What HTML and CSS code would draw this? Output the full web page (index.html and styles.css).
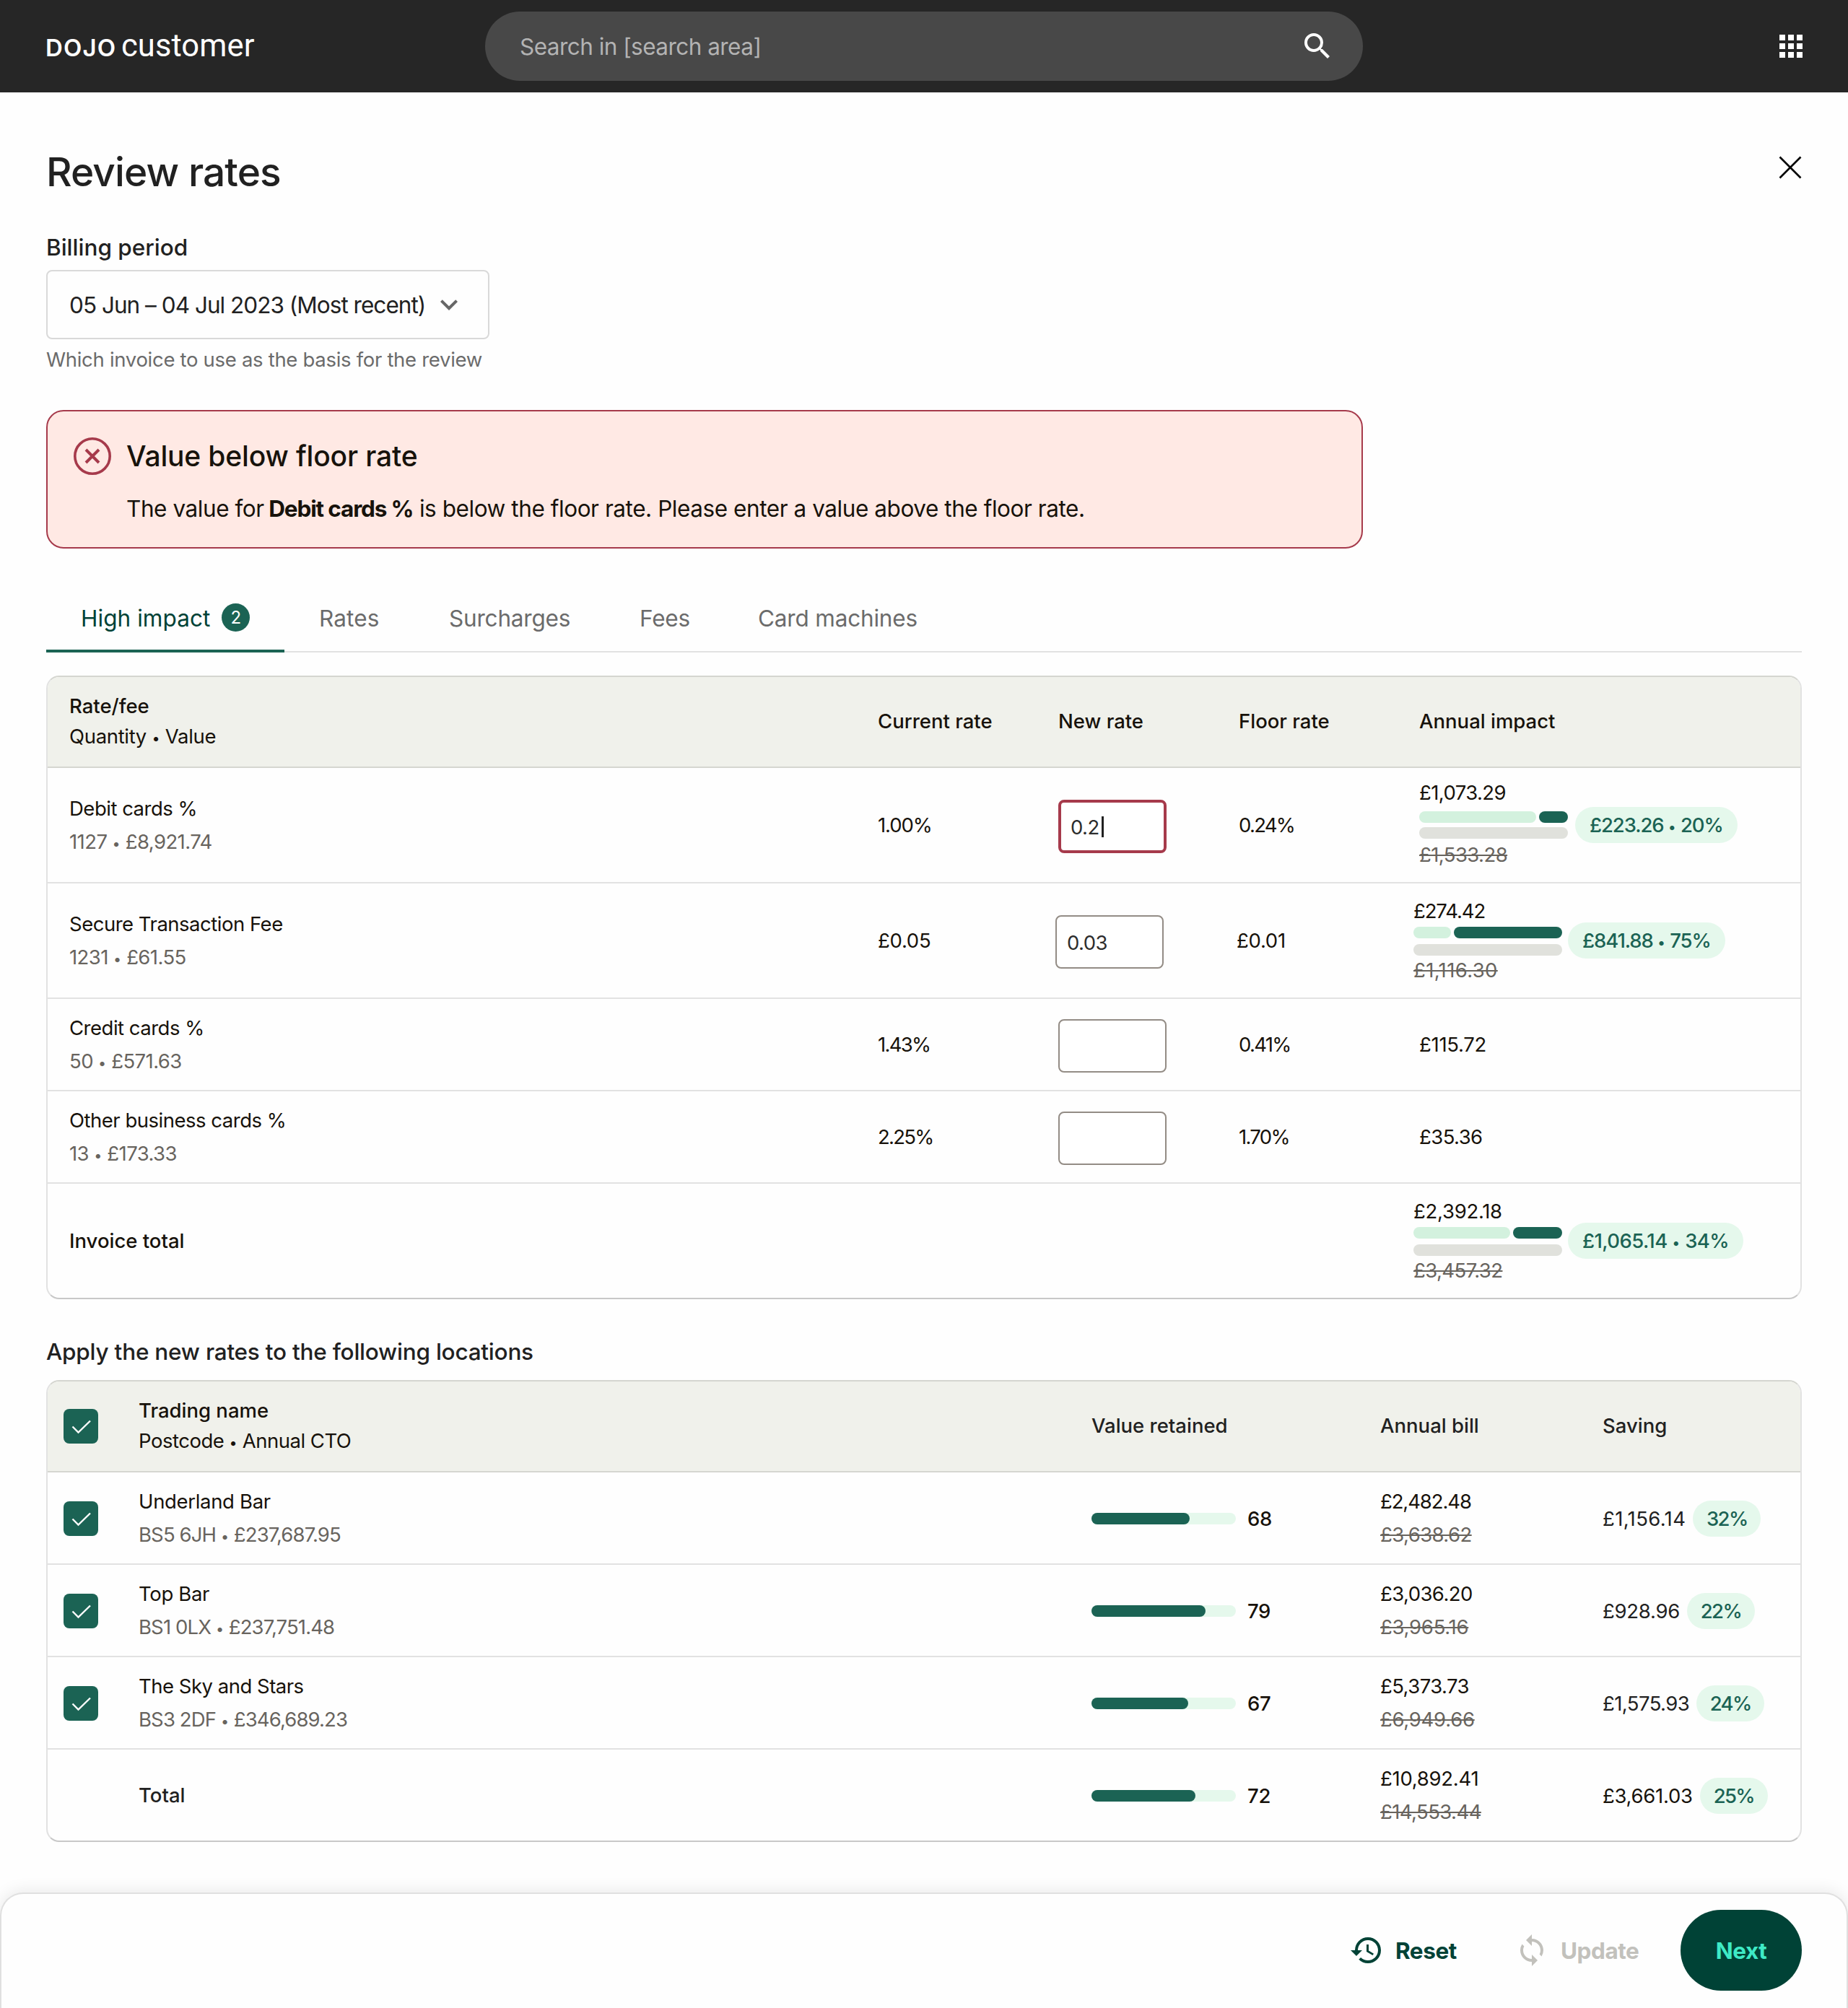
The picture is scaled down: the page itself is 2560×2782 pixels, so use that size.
FILE: index.html
```html
<!DOCTYPE html>
<html lang="en">
<head>
<meta charset="utf-8">
<title>Review rates</title>
<link rel="stylesheet" href="styles.css">
</head>
<body>
<header class="topbar">
  <div class="brand"><span class="brand-mark">DOJO</span><span class="brand-name">customer</span></div>
  <div class="search">
    <span class="search-text">Search in [search area]</span>
    <svg class="icon" viewBox="0 0 24 24"><path fill="#fff" d="M15.500 14h-.79l-.28-.27A6.471 6.471 0 0 0 16 9.500 6.500 6.500 0 1 0 9.500 16c1.610 0 3.090-.59 4.230-1.570l.27.28v.79l5 4.990L20.490 19l-4.990-5zm-6 0C7.010 14 5 11.990 5 9.500S7.010 5 9.500 5 14 7.010 14 9.500 11.990 14 9.500 14z"/></svg>
  </div>
  <div class="apps"><i></i><i></i><i></i><i></i><i></i><i></i><i></i><i></i><i></i></div>
</header>

<main class="page">
  <div class="title-row">
    <h1 class="title">Review rates</h1>
    <svg class="close" viewBox="0 0 32 32"><path d="M1.500 1.500l29 29M30.500 1.500l-29 29" stroke="#000" stroke-width="2.600" fill="none"/></svg>
  </div>

  <div class="label period-label">Billing period</div>
  <div class="select"><span class="select-text">05 Jun – 04 Jul 2023 (Most recent)</span>
    <svg class="icon" viewBox="0 0 24 24"><path fill="#666" d="M16.590 8.590L12 13.170 7.410 8.590 6 10l6 6 6-6z"/></svg>
  </div>
  <div class="helper">Which invoice to use as the basis for the review</div>

  <section class="alert">
    <svg class="alert-icon" viewBox="0 0 52 52" fill="none" stroke="#a63a4b"><circle cx="26" cy="26" r="24.200" stroke-width="3.600"/><path d="M17 17l18 18M35 17L17 35" stroke-width="4"/></svg>
    <div>
      <h2 class="alert-title">Value below floor rate</h2>
      <p class="alert-body">The value for <b>Debit cards %</b> is below the floor rate. Please enter a value above the floor rate.</p>
    </div>
  </section>

  <nav class="tabs">
    <a class="tab tab-active">High impact<span class="count">2</span></a>
    <a class="tab tab-rates">Rates</a>
    <a class="tab tab-surcharges">Surcharges</a>
    <a class="tab tab-fees">Fees</a>
    <a class="tab tab-machines">Card machines</a>
  </nav>

  <section class="table rates">
    <div class="row head">
      <div class="stack"><span class="strong">Rate/fee</span><span>Quantity <span class="dot">•</span> Value</span></div>
      <div class="strong">Current rate</div><div class="strong">New rate</div><div class="strong">Floor rate</div><div class="strong">Annual impact</div>
    </div>
    <div class="row tall first">
      <div class="stack"><span class="name">Debit cards %</span><span class="sub num">1127 <span class="dot">•</span> £8,921.74</span></div>
      <div class="num snug">1.00%</div>
      <div><div class="input input-error">0.2<i class="caret"></i></div></div>
      <div class="num tight">0.24%</div>
      <div class="impact impact-first">
        <div class="bars"><span class="num">£1,073.29</span><div class="split"><i class="kept" style="width:162px"></i><i class="saved"></i></div><i class="base"></i><s class="num">£1,533.28</s></div>
        <span class="pill num snug">£223.26 <span class="dot">•</span> 20%</span>
      </div>
    </div>
    <div class="row tall inset">
      <div class="stack"><span class="name">Secure Transaction Fee</span><span class="sub num">1231 <span class="dot">•</span> £61.55</span></div>
      <div class="num wide">£0.05</div>
      <div><div class="input">0.03</div></div>
      <div class="num wide">£0.01</div>
      <div class="impact">
        <div class="bars"><span class="num snug">£274.42</span><div class="split"><i class="kept" style="width:52px"></i><i class="saved"></i></div><i class="base"></i><s class="num wider">£1,116.30</s></div>
        <span class="pill num snug">£841.88 <span class="dot">•</span> 75%</span>
      </div>
    </div>
    <div class="row">
      <div class="stack"><span class="name">Credit cards %</span><span class="sub num">50 <span class="dot">•</span> £571.63</span></div>
      <div class="num tight">1.43%</div><div><div class="input"></div></div><div class="num tight">0.41%</div><div class="num wide">£115.72</div>
    </div>
    <div class="row">
      <div class="stack"><span class="name">Other business cards %</span><span class="sub num">13 <span class="dot">•</span> £173.33</span></div>
      <div class="num tight">2.25%</div><div><div class="input"></div></div><div class="num tight">1.70%</div><div class="num">£35.36</div>
    </div>
    <div class="row tall inset">
      <div class="strong">Invoice total</div><div></div><div></div><div></div>
      <div class="impact">
        <div class="bars"><span class="num wide">£2,392.18</span><div class="split"><i class="kept" style="width:134px"></i><i class="saved"></i></div><i class="base"></i><s class="num">£3,457.32</s></div>
        <span class="pill num">£1,065.14 <span class="dot">•</span> 34%</span>
      </div>
    </div>
  </section>

  <div class="label apply-label">Apply the new rates to the following locations</div>

  <section class="table locations">
    <div class="row head">
      <svg class="check" viewBox="0 0 48 48"><rect width="48" height="48" rx="8"/><path d="M12.500 24.500l8 8L37 16.500"/></svg>
      <div class="stack"><span class="strong">Trading name</span><span class="name">Postcode <span class="dot">•</span> Annual CTO</span></div>
      <div class="strong soft">Value retained</div><div class="strong soft">Annual bill</div><div class="strong soft">Saving</div>
    </div>
    <div class="row">
      <svg class="check" viewBox="0 0 48 48"><rect width="48" height="48" rx="8"/><path d="M12.500 24.500l8 8L37 16.500"/></svg>
      <div class="stack"><span>Underland Bar</span><span class="sub num mid">BS5 6JH <span class="dot">•</span> £237,687.95</span></div>
      <div class="retained"><div class="track"><i style="width:68%"></i></div><b>68</b></div>
      <div class="stack"><span class="num snug">£2,482.48</span><s class="num">£3,638.62</s></div>
      <div class="saving"><span class="num wider soft">£1,156.14</span><span class="pill">32%</span></div>
    </div>
    <div class="row">
      <svg class="check" viewBox="0 0 48 48"><rect width="48" height="48" rx="8"/><path d="M12.500 24.500l8 8L37 16.500"/></svg>
      <div class="stack"><span>Top Bar</span><span class="sub num mid">BS1 0LX <span class="dot">•</span> £237,751.48</span></div>
      <div class="retained"><div class="track"><i style="width:79%"></i></div><b>79</b></div>
      <div class="stack"><span class="num">£3,036.20</span><s class="num wide">£3,965.16</s></div>
      <div class="saving"><span class="num wide soft">£928.96</span><span class="pill">22%</span></div>
    </div>
    <div class="row">
      <svg class="check" viewBox="0 0 48 48"><rect width="48" height="48" rx="8"/><path d="M12.500 24.500l8 8L37 16.500"/></svg>
      <div class="stack"><span class="name">The Sky and Stars</span><span class="sub num mid">BS3 2DF <span class="dot">•</span> £346,689.23</span></div>
      <div class="retained"><div class="track"><i style="width:67%"></i></div><b>67</b></div>
      <div class="stack"><span class="num">£5,373.73</span><s class="num wide">£6,949.66</s></div>
      <div class="saving"><span class="num soft">£1,575.93</span><span class="pill">24%</span></div>
    </div>
    <div class="row">
      <div></div>
      <div class="strong soft">Total</div>
      <div class="retained"><div class="track"><i style="width:72%"></i></div><b>72</b></div>
      <div class="stack"><span class="num wide">£10,892.41</span><s class="num">£14,553.44</s></div>
      <div class="saving"><span class="num wide">£3,661.03</span><span class="pill">25%</span></div>
    </div>
  </section>
</main>

<footer class="actions">
  <div class="action reset">
    <svg class="icon" viewBox="0 0 24 24"><path fill="currentColor" d="M13 3a9 9 0 0 0-9 9H1l3.890 3.890.07.14L9 12H6c0-3.870 3.130-7 7-7s7 3.130 7 7-3.130 7-7 7c-1.930 0-3.680-.79-4.940-2.060l-1.420 1.420A8.954 8.954 0 0 0 13 21a9 9 0 0 0 0-18zm-1 5v5l4.280 2.540.72-1.210-3.500-2.080V8z"/></svg>
    <span>Reset</span>
  </div>
  <div class="action update">
    <svg class="icon" viewBox="0 0 24 24"><path fill="currentColor" d="M12 4V1L8 5l4 4V6c3.310 0 6 2.690 6 6 0 1.010-.25 1.970-.7 2.800l1.460 1.460A7.930 7.930 0 0 0 20 12c0-4.420-3.580-8-8-8zm0 14c-3.310 0-6-2.690-6-6 0-1.010.25-1.970.7-2.800L5.240 7.740A7.930 7.930 0 0 0 4 12c0 4.420 3.580 8 8 8v3l4-4-4-4z"/></svg>
    <span>Update</span>
  </div>
  <div class="next">Next</div>
</footer>
</body>
</html>
```
FILE: styles.css
```css
* { box-sizing: border-box; }
body {
  margin: 0;
  background: #fefefe;
  font-family: Inter, "Liberation Sans", sans-serif;
  font-size: 27.5px;
  line-height: 40px;
  letter-spacing: -0.012em;
  color: #17120b;
}
h1, h2, p { margin: 0; font-weight: 500; }
i { display: block; }
.icon { width: 48px; height: 48px; flex: none; }

.topbar { height: 128px; background: #262626; display: flex; align-items: center; padding: 0 63px 0 64px; }
.brand { width: 608px; padding-top: 2px; display: flex; align-items: baseline; color: #fff; }
.brand-mark { font-size: 33px; font-weight: 600; letter-spacing: 0.035em; width: 105px; margin-left: -1px; }
.brand-name { font-family: Roboto, sans-serif; font-size: 43.500px; letter-spacing: 0.002em; }
.search { width: 1216px; height: 96px; border-radius: 48px; background: #484848; display: flex; align-items: center; justify-content: space-between; padding: 0 39px 0 48px; }
.search-text { color: #b3b3b3; font-size: 31.500px; letter-spacing: -0.017em; padding-top: 2px; }
.apps { margin-left: auto; display: grid; grid-template-columns: repeat(3, 8px); gap: 4px; }
.apps i { width: 8px; height: 8px; background: #fff; }

.page { padding: 74px 64px 70px; }
.title-row { display: flex; justify-content: space-between; height: 72px; }
.title { font-size: 55px; line-height: 73px; color: #212121; font-weight: 500; letter-spacing: -0.0165em; }
.close { width: 32px; height: 32px; margin-top: 14px; }
.label { font-size: 31.500px; line-height: 48px; font-weight: 500; color: #212121; letter-spacing: -0.007em; }
.period-label { margin-top: 45px; letter-spacing: 0; }
.select { margin-top: 7px; width: 614px; height: 96px; border: 2px solid #d9d9d9; border-radius: 8px; display: flex; align-items: center; padding-left: 30px; gap: 9px; font-size: 31.500px; color: #212121; }
.select-text { width: 493px; padding-top: 2px; white-space: nowrap; letter-spacing: -0.031em; }
.helper { margin-top: 8px; color: #6b6b6b; letter-spacing: -0.011em; }

.alert { margin-top: 50px; width: 1824px; height: 192px; border: 2px solid #a63a4b; border-radius: 24px; background: #ffe9e4; display: flex; gap: 21px; padding: 36px; }
.alert-icon { width: 52px; height: 52px; flex: none; }
.alert-title { font-size: 39px; line-height: 52px; letter-spacing: -0.004em; }
.alert-body { font-size: 31.500px; line-height: 48px; margin-top: 23px; font-weight: 400; letter-spacing: -0.0138em; }
.alert-body b { font-weight: 700; letter-spacing: -0.036em; margin-left: -2px; }

.tabs { margin-top: 48px; height: 96px; border-bottom: 2px solid #e2e2e2; display: flex; }
.tab { height: 96px; line-height: 98px; padding-left: 48px; font-size: 31.500px; color: #6b6b6b; letter-spacing: -0.006em; }
.tab-active { width: 330px; color: #004236; border-bottom: 4px solid #1b6354; display: flex; align-items: center; gap: 16px; letter-spacing: 0.002em; padding-top: 6px; }
.tab-rates { width: 180px; letter-spacing: 0.004em; }
.tab-surcharges { width: 264px; }
.tab-fees { width: 164px; }
.count { width: 39px; height: 39px; margin-top: -4px; border-radius: 50%; background: #1b6354; color: #fff; font-size: 24px; line-height: 39px; text-align: center; }

.table { border: 2px solid #e2e2e2; border-top-color: #d5d6d0; border-bottom-color: #c8c8c8; border-radius: 18px; overflow: hidden; }
.rates { margin-top: 32px; height: 864px; }
.row { height: 128px; border-bottom: 2px solid #e2e2e2; display: grid; align-items: center; }
.rates .row { grid-template-columns: 1120px 250px 250px 250px 1fr; padding-left: 30px; }
.rates .inset { grid-template-columns: 1120px 246px 251px 245px 1fr; }
.rates .tall { height: 160px; }
.table .head { height: 126px; background: #f0f1eb; border-bottom-color: #d5d6d0; padding-bottom: 2px; }
.row:last-child { border-bottom: 0; }
.rates .row:last-child { height: 158px; }
.locations .row:last-child { height: 126px; }
.stack { display: flex; flex-direction: column; line-height: 46px; }
.head .stack { line-height: 42px; }
.strong { font-weight: 500; letter-spacing: 0; }
.name { letter-spacing: -0.018em; }
.soft { color: #212121; }
.sub, s { color: #68645e; }
.dot { display: inline-block; width: 11px; font-size: 0.72em; letter-spacing: 0; text-align: center; line-height: 1; }
.num { letter-spacing: -0.021em; }
.num.tight { letter-spacing: -0.062em; }
.num.snug { letter-spacing: -0.04em; }
.num.mid { letter-spacing: -0.032em; }
.num.wide { letter-spacing: -0.01em; }
.num.wider { letter-spacing: 0.013em; }
s { text-decoration-thickness: 2px; }

.input { width: 150px; height: 74px; margin-top: 4px; border: 2px solid #938c85; border-radius: 8px; background: #fff; padding: 1px 0 0 14px; display: flex; align-items: center; color: #2d2d2d; letter-spacing: -0.02em; }
.input-error { border: 4px solid #a63a4b; padding-left: 13px; }
.caret { width: 3px; height: 29px; background: #212121; margin-left: 3px; }

.impact { display: flex; align-items: center; gap: 8px; }
.bars { width: 206px; display: flex; flex-direction: column; }
.split { display: flex; gap: 4px; margin: 2px 0 8px; }
.split i, .base { height: 16px; border-radius: 8px; }
.kept { background: #d3f1de; }
.saved { flex: 1; background: #1b6354; }
.base { background: #e0e1dc; }
.impact-first { gap: 10px; }
.impact-first .bars { margin-top: -4px; }
.impact-first .split { margin: 6px 0; }
.impact-first s { margin-top: 2px; }
.pill { height: 50px; line-height: 50px; border-radius: 25px; padding: 0 20px; background: #e5f8ec; color: #1b6354; font-weight: 500; white-space: nowrap; }

.apply-label { margin-top: 49px; }
.locations { margin-top: 15px; height: 640px; }
.locations .row { grid-template-columns: 104px 1320px 400px 308px 1fr; padding-left: 22px; }
.check { width: 48px; height: 48px; margin-top: 2px; }
.check rect { fill: #1b6354; }
.check path { fill: none; stroke: #fff; stroke-width: 2.400; }
.retained { display: flex; align-items: center; gap: 16px; padding-top: 2px; }
.retained b { font-weight: 500; }
.track { width: 200px; height: 16px; border-radius: 8px; background: #e5f8ec; }
.track i { height: 16px; border-radius: 8px; background: #1b6354; }
.saving { display: flex; align-items: center; gap: 10px; padding-top: 1px; }
.saving .pill { width: 94px; padding: 0; text-align: center; letter-spacing: -0.06em; }

.actions { height: 160px; border: 2px solid #e0e0e0; border-bottom: 0; border-radius: 32px 32px 0 0; background: #fefefe; box-shadow: 0 -2px 22px rgba(0, 0, 0, 0.09); display: flex; align-items: center; justify-content: flex-end; padding: 0 62px 2px 0; font-size: 31.500px; font-weight: 700; letter-spacing: -0.014em; }
.action { display: flex; align-items: center; gap: 16px; }
.action span { padding-top: 2px; }
.reset { color: #004236; width: 229px; }
.update { color: #c2c1bc; width: 230px; }
.next { width: 168px; height: 112px; border-radius: 56px; background: #004236; color: #3eeac6; line-height: 114px; text-align: center; }
```
